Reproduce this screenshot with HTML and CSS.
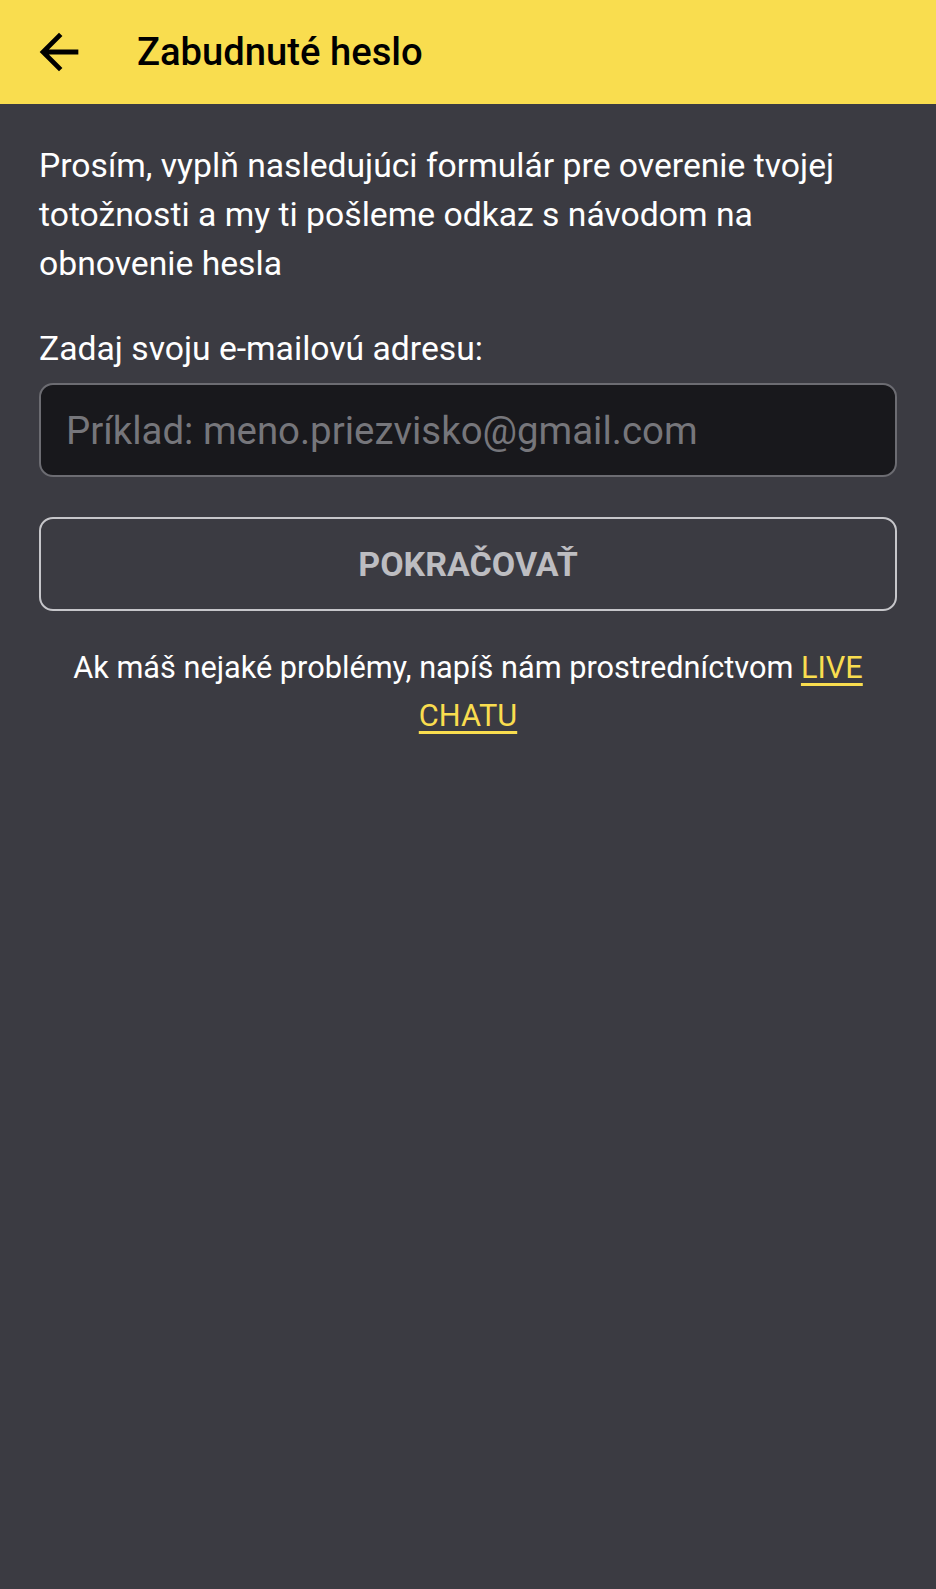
FILE: index.html
```html
<!DOCTYPE html>
<html lang="sk">
<head>
<meta charset="utf-8">
<title>Zabudnuté heslo</title>
<link rel="stylesheet" href="styles.css">
</head>
<body>
<header class="toolbar">
  <button class="back" aria-label="Späť">
    <svg viewBox="0 0 24 24" width="58" height="58"><path d="M20 11H7.83l5.59-5.59L12 4l-8 8 8 8 1.41-1.41L7.83 13H20v-2z" fill="#000"/></svg>
  </button>
  <h1 class="title">Zabudnuté heslo</h1>
</header>
<main class="content">
  <p class="intro">Prosím, vyplň nasledujúci formulár pre overenie tvojej totožnosti a my ti pošleme odkaz s návodom na obnovenie hesla</p>
  <label class="label" for="email">Zadaj svoju e-mailovú adresu:</label>
  <input class="input" id="email" type="email" placeholder="Príklad: meno.priezvisko@gmail.com">
  <button class="submit">POKRAČOVAŤ</button>
  <p class="help">Ak máš nejaké problémy, napíš nám prostredníctvom <a href="#" class="link">LIVE CHATU</a></p>
</main>
</body>
</html>
```
FILE: styles.css
```css
html, body {
  margin: 0;
  padding: 0;
  height: 100%;
}
body {
  background: #3b3b42;
  font-family: Roboto, "Noto Sans", sans-serif;
  color: #fff;
}
.toolbar {
  height: 104px;
  background: #f9dd4f;
  display: flex;
  align-items: center;
  box-sizing: border-box;
  padding-left: 30px;
}
.back {
  background: none;
  border: 0;
  padding: 0;
  width: 58px;
  height: 58px;
  display: flex;
}
.title {
  margin: 0 0 0 49px;
  font-size: 38.2px;
  font-weight: 500;
  color: #000;
}
.content {
  padding: 37px 39px 0;
  display: flex;
  flex-direction: column;
}
.intro {
  margin: 0;
  font-size: 33.7px;
  line-height: 49px;
}
.label {
  margin-top: 36px;
  font-size: 33.7px;
  line-height: 49px;
}
.input {
  margin-top: 10px;
  height: 94px;
  box-sizing: border-box;
  background: #18181c;
  border: 2px solid #6c6c72;
  border-radius: 14px;
  padding: 0 25px;
  font-family: inherit;
  font-size: 38.4px;
  color: #fff;
  outline: none;
}
.input::placeholder {
  color: #76767b;
}
.submit {
  margin-top: 40px;
  height: 94px;
  box-sizing: border-box;
  background: transparent;
  border: 2px solid #c6c6ca;
  border-radius: 14px;
  font-family: inherit;
  font-size: 34px;
  font-weight: 700;
  color: #bdbdc1;
}
.help {
  margin: 33px 0 0;
  text-align: center;
  font-size: 30.7px;
  line-height: 48px;
  padding: 0 24px;
}
.link {
  color: #f9dd4f;
  text-decoration: underline;
  text-underline-offset: 5px;
}
```
